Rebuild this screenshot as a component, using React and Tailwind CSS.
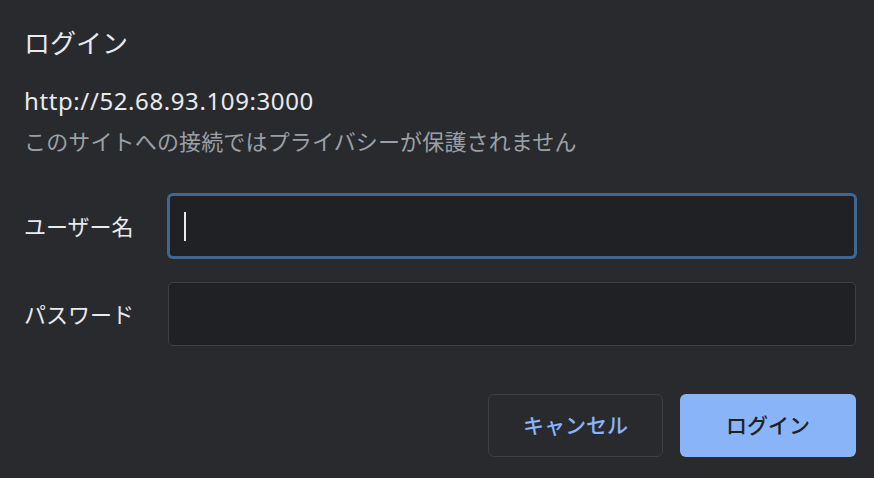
export default function App() {
    return (
        <div className="w-[874px] h-[478px] overflow-hidden bg-[#292a2d] pl-6 pr-[18px] pt-[27px] text-[#e8eaed] font-['Noto_Sans','Noto_Sans_CJK_JP',sans-serif]">
            {/* Header */}
            <h1 className="text-[26px] leading-[32px] font-normal">ログイン</h1>
            <p className="mt-7 text-[24px] leading-[28px] tracking-[0.6px]">http://52.68.93.109:3000</p>
            <p className="mt-3 text-[22px] leading-[28px] tracking-[0.15px] text-[#9aa0a6]">
                このサイトへの接続ではプライバシーが保護されません
            </p>

            {/* Fields */}
            <div className="mt-[39px] flex flex-col gap-6">
                <div className="flex items-center">
                    <label className="w-[144px] shrink-0 text-[22px] leading-[28px]">ユーザー名</label>
                    <div className="flex-1 h-[64px] rounded-[5px] border-2 border-[#3e6893] ring-1 ring-[#3e6893] bg-[#202124] flex items-center pl-[14px]">
                        <span className="block w-[2px] h-[29px] bg-[#e8eaed]" />
                    </div>
                </div>
                <div className="flex items-center">
                    <label className="w-[144px] shrink-0 text-[22px] leading-[28px]">パスワード</label>
                    <div className="flex-1 h-[64px] rounded-[5px] border border-[#3c4043] bg-[#202124]" />
                </div>
            </div>

            {/* Actions */}
            <div className="mt-12 flex justify-end gap-[17px]">
                <button
                    type="button"
                    className="w-[175px] h-[63px] rounded-[6px] border border-[#3c4043] bg-[#292a2d] text-[21px] font-medium text-[#8ab4f8]"
                >
                    キャンセル
                </button>
                <button
                    type="button"
                    className="w-[176px] h-[63px] rounded-[6px] bg-[#8ab4f8] text-[21px] font-medium text-[#202124]"
                >
                    ログイン
                </button>
            </div>
        </div>
    );
}
